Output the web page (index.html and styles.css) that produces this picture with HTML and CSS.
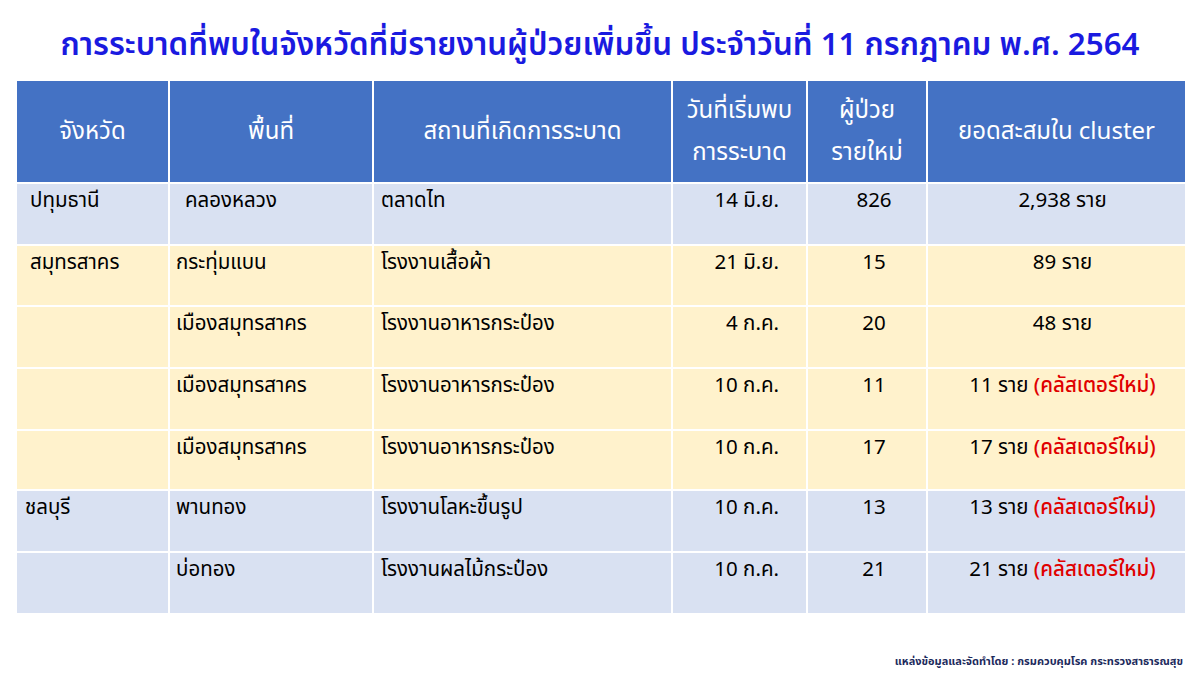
FILE: index.html
```html
<!DOCTYPE html>
<html lang="th">
<head>
<meta charset="utf-8">
<link rel="stylesheet" href="styles.css">
</head>
<body>
<div class="page">
  <h1 class="title">การระบาดที่พบในจังหวัดที่มีรายงานผู้ป่วยเพิ่มขึ้น ประจำวันที่ 11 กรกฎาคม พ.ศ. 2564</h1>
  <table class="tbl">
    <colgroup>
      <col class="c1"><col class="c2"><col class="c3"><col class="c4"><col class="c5"><col class="c6">
    </colgroup>
    <thead>
      <tr class="hrow">
        <th>จังหวัด</th>
        <th>พื้นที่</th>
        <th>สถานที่เกิดการระบาด</th>
        <th>วันที่เริ่มพบ<br>การระบาด</th>
        <th>ผู้ป่วย<br>รายใหม่</th>
        <th>ยอดสะสมใน cluster</th>
      </tr>
    </thead>
    <tbody>
      <tr class="blue r60">
        <td class="prov">ปทุมธานี</td><td class="area a2">คลองหลวง</td><td class="place">ตลาดไท</td><td class="date">14 มิ.ย.</td><td class="num">826</td><td class="cum">2,938 ราย</td>
      </tr>
      <tr class="yellow r59">
        <td class="prov">สมุทรสาคร</td><td class="area">กระทุ่มแบน</td><td class="place">โรงงานเสื้อผ้า</td><td class="date">21 มิ.ย.</td><td class="num">15</td><td class="cum">89 ราย</td>
      </tr>
      <tr class="yellow r60">
        <td class="prov"></td><td class="area">เมืองสมุทรสาคร</td><td class="place">โรงงานอาหารกระป๋อง</td><td class="date">4 ก.ค.</td><td class="num">20</td><td class="cum">48 ราย</td>
      </tr>
      <tr class="yellow r60">
        <td class="prov"></td><td class="area">เมืองสมุทรสาคร</td><td class="place">โรงงานอาหารกระป๋อง</td><td class="date">10 ก.ค.</td><td class="num">11</td><td class="cum">11 ราย <span class="new">(คลัสเตอร์ใหม่)</span></td>
      </tr>
      <tr class="yellow r58">
        <td class="prov"></td><td class="area">เมืองสมุทรสาคร</td><td class="place">โรงงานอาหารกระป๋อง</td><td class="date">10 ก.ค.</td><td class="num">17</td><td class="cum">17 ราย <span class="new">(คลัสเตอร์ใหม่)</span></td>
      </tr>
      <tr class="blue r60">
        <td class="prov p2">ชลบุรี</td><td class="area">พานทอง</td><td class="place">โรงงานโลหะขึ้นรูป</td><td class="date">10 ก.ค.</td><td class="num">13</td><td class="cum">13 ราย <span class="new">(คลัสเตอร์ใหม่)</span></td>
      </tr>
      <tr class="blue r60">
        <td class="prov"></td><td class="area">บ่อทอง</td><td class="place">โรงงานผลไม้กระป๋อง</td><td class="date">10 ก.ค.</td><td class="num">21</td><td class="cum">21 ราย <span class="new">(คลัสเตอร์ใหม่)</span></td>
      </tr>
    </tbody>
  </table>
  <div class="source">แหล่งข้อมูลและจัดทำโดย : กรมควบคุมโรค กระทรวงสาธารณสุข</div>
</div>
</body>
</html>
```

FILE: styles.css
```css
html, body {
  margin: 0;
  padding: 0;
  background: #ffffff;
}
.page {
  width: 1200px;
  height: 675px;
  overflow: hidden;
  font-family: "Noto Sans Thai", "Tahoma", "Leelawadee UI", "Loma", "Garuda", "DejaVu Sans", sans-serif;
  color: #000;
}
.title {
  margin: 0;
  padding-top: 26px;
  height: 53px;
  text-align: center;
  font-size: 31.3px;
  line-height: 40px;
  font-weight: 600;
  color: #1a1ae0;
  letter-spacing: 0;
}
.tbl {
  margin-left: 15px;
  border-collapse: separate;
  border-spacing: 2px;
  table-layout: fixed;
  width: 1172px;
}
.c1 { width: 151px; }
.c2 { width: 202px; }
.c3 { width: 297px; }
.c4 { width: 133px; }
.c5 { width: 118px; }
.c6 { width: 257px; }
.tbl th, .tbl td {
  padding: 0;
  overflow: hidden;
  white-space: nowrap;
}
.hrow th {
  height: 101px;
  background: #4472c4;
  color: #ffffff;
  font-weight: normal;
  font-size: 24px;
  line-height: 42px;
  text-align: center;
  vertical-align: middle;
}
.tbl td {
  vertical-align: top;
  font-size: 20.5px;
  line-height: 28px;
  padding-top: 3px;
}
.r60 td { height: 57px; }
.r59 td { height: 56px; }
.r58 td { height: 55px; }
.blue td { background: #d9e1f2; }
.yellow td { background: #fff2cc; }
.prov { padding-left: 13px !important; }
.p2 { padding-left: 8px !important; }
.area { padding-left: 6px !important; }
.a2 { padding-left: 15px !important; }
.place { padding-left: 7px !important; }
.date { text-align: right; padding-right: 27px !important; }
.num { text-align: center; padding-left: 14px !important; }
.cum { text-align: center; padding-left: 12px !important; }
.new { color: #e00000; font-weight: 500; }
.source {
  margin-top: 38px;
  padding-right: 17px;
  text-align: right;
  font-size: 11px;
  font-weight: bold;
  color: #1c2a5c;
}
```
